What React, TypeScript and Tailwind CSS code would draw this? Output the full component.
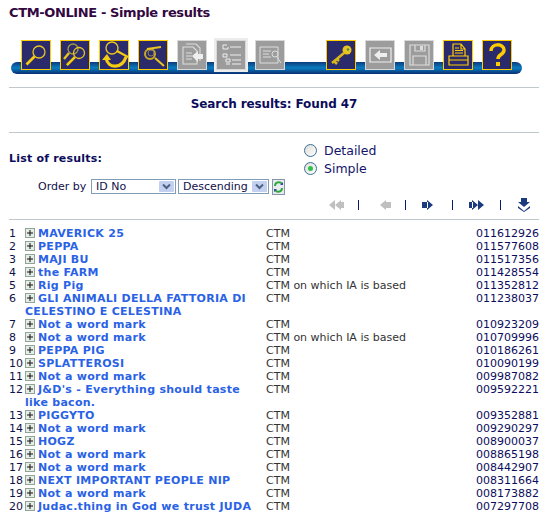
import type { ReactNode } from "react";

const rows = [
  { title: "MAVERICK 25", type: "CTM", no: "011612926" },
  { title: "PEPPA", type: "CTM", no: "011577608" },
  { title: "MAJI BU", type: "CTM", no: "011517356" },
  { title: "the FARM", type: "CTM", no: "011428554" },
  { title: "Rig Pig", type: "CTM on which IA is based", no: "011352812" },
  { title: "GLI ANIMALI DELLA FATTORIA DI CELESTINO E CELESTINA", type: "CTM", no: "011238037" },
  { title: "Not a word mark", type: "CTM", no: "010923209" },
  { title: "Not a word mark", type: "CTM on which IA is based", no: "010709996" },
  { title: "PEPPA PIG", type: "CTM", no: "010186261" },
  { title: "SPLATTEROSI", type: "CTM", no: "010090199" },
  { title: "Not a word mark", type: "CTM", no: "009987082" },
  { title: "J&D's - Everything should taste like bacon.", type: "CTM", no: "009592221" },
  { title: "PIGGYTO", type: "CTM", no: "009352881" },
  { title: "Not a word mark", type: "CTM", no: "009290297" },
  { title: "HOGZ", type: "CTM", no: "008900037" },
  { title: "Not a word mark", type: "CTM", no: "008865198" },
  { title: "Not a word mark", type: "CTM", no: "008442907" },
  { title: "NEXT IMPORTANT PEOPLE NIP", type: "CTM", no: "008311664" },
  { title: "Not a word mark", type: "CTM", no: "008173882" },
  { title: "Judac.thing in God we trust JUDA", type: "CTM", no: "007297708" },
];

const Lens = ({ cx = 17, cy = 12, r = 6 }: { cx?: number; cy?: number; r?: number }) => (
  <>
    <circle cx={cx} cy={cy} r={r} fill="none" stroke="#e8c420" strokeWidth="1.3" />
    <path d={`M${cx - r * 0.75} ${cy + r * 0.75}L${cx - r * 0.75 - 8} ${cy + r * 0.75 + 8}`} stroke="#f5cc10" strokeWidth="2.6" />
  </>
);

function ToolButton({ children, off, wide }: { children: ReactNode; off?: boolean; wide?: boolean }) {
  return (
    <div
      className={`relative flex h-[30px] w-[30px] shrink-0 items-center justify-center border ${
        off ? "border-[#d8d8d8] bg-[#9c9c9c]" : "border-[#ffcc00] bg-[#2b2b6b]"
      } ${wide ? "outline-2 outline-[#ececec]" : ""}`}
    >
      <svg width="28" height="28" viewBox="0 0 28 28" fill="none">
        {children}
      </svg>
    </div>
  );
}

function Sep() {
  return <span className="h-[10px] w-px bg-[#0a1a6a]" />;
}

function PlusIcon() {
  return (
    <span className="mr-[3px] inline-flex h-[10px] w-[10px] items-center justify-center border border-[#8fa596] bg-[#e6ece6]">
      <svg width="8" height="8" viewBox="0 0 8 8">
        <path d="M1 4H7M4 1V7" stroke="#111" strokeWidth="1" />
      </svg>
    </span>
  );
}

function FakeSelect({ label, width }: { label: string; width: string }) {
  return (
    <div className={`flex h-[15px] items-center justify-between border border-[#7f9db9] bg-white pl-[4px] pr-[1px] ${width}`}>
      <span className="text-[#10104a]">{label}</span>
      <span className="flex h-[11px] w-[15px] items-center justify-center rounded-[1px] bg-[#c3d0f0]">
        <svg width="9" height="7" viewBox="0 0 9 7">
          <path d="M1 1.5L4.5 5L8 1.5" fill="none" stroke="#4d6185" strokeWidth="2" />
        </svg>
      </span>
    </div>
  );
}

function Radio({ label, on }: { label: string; on?: boolean }) {
  return (
    <div className="flex h-[18px] items-center gap-[7px] text-[12.5px] text-[#14146a]">
      <span className="flex h-[13px] w-[13px] items-center justify-center rounded-full border border-[#3d6f97] bg-gradient-to-br from-[#dcdcd8] to-white">
        {on && <span className="h-[5px] w-[5px] rounded-full bg-[#2fc04a]" />}
      </span>
      {label}
    </div>
  );
}

export default function App() {
  return (
    <div className="h-[516px] w-[549px] overflow-hidden bg-white pl-[9px] pr-[10px] font-['DejaVu_Sans',Verdana,sans-serif] text-[11px] leading-[13px] text-[#10104a]">
      <h1 className="pt-[4px] text-[13px] font-bold leading-[17px] tracking-[-0.38px] text-[#33073f]">CTM-ONLINE - Simple results</h1>

      <div className="relative mt-[19px] h-[34px] w-[513px]">
        <div className="absolute bottom-0 left-[2px] h-[12px] w-[511px] rounded-[6px] bg-gradient-to-b from-[#0b3c7e] via-[#0a7cc0] to-[#0a2f72]" />
        <div className="relative ml-[12px] flex gap-[9px]">
          <ToolButton><Lens cx={17} cy={11} r={6} /></ToolButton>
          <ToolButton>
            <circle cx="12" cy="8" r="5" stroke="#a89a40" strokeWidth="1.3" />
            <path d="M8 12L3 18" stroke="#e8c420" strokeWidth="2.4" />
            <Lens cx={18} cy={12} r={5.5} />
          </ToolButton>
          <ToolButton>
            <circle cx="12" cy="7" r="6" stroke="#e8c420" strokeWidth="1.4" />
            <path d="M17 10L28 16" stroke="#f5cc10" strokeWidth="2" />
            <path d="M6 17C8 28 22 28 26 16" stroke="#f5cc10" strokeWidth="3.2" />
            <path d="M2 19L7 13L11 19Z" fill="#f5cc10" />
          </ToolButton>
          <ToolButton>
            <circle cx="11" cy="13" r="5" stroke="#c8a820" strokeWidth="2" />
            <circle cx="12" cy="12" r="3" stroke="#8a8060" strokeWidth="1" />
            <path d="M8 8L22 6M16 17L25 25" stroke="#e8c420" strokeWidth="2" />
          </ToolButton>
          <ToolButton off>
            <path d="M5 6H15L19 10V23H5Z M8 3H18L22 7V20" stroke="#ddd" strokeWidth="1.1" />
            <path d="M8 12H14M8 15H14M8 18H14" stroke="#ddd" />
            <path d="M14 15L20 10V13H25V18H20V21Z" fill="#eee" />
          </ToolButton>
          <ToolButton off wide>
            <path d="M6 4H10M6 4V8H11V6M13 6H24M6 13H10V16H6ZM13 14H24M9 18H13V21H9ZM15 19H24M9 23H13M15 23H24" stroke="#eee" strokeWidth="1" />
          </ToolButton>
          <ToolButton off>
            <path d="M4 6H22V22H4ZM7 10H15M7 13H13M7 16H15" stroke="#ddd" strokeWidth="1" />
            <circle cx="19" cy="13" r="3" stroke="#ddd" />
            <path d="M21 16L25 22" stroke="#ddd" />
          </ToolButton>
          <div className="w-[23px] shrink-0" />
          <ToolButton>
            <circle cx="20" cy="9" r="4.5" fill="#e8c420" />
            <circle cx="21" cy="8.5" r="1.2" fill="#4a8a50" />
            <path d="M17 12L5 22M7 20L10 23M10 18L12 20" stroke="#d8b818" strokeWidth="2.5" />
          </ToolButton>
          <ToolButton off>
            <path d="M4 7H25V21H4Z" stroke="#eee" strokeWidth="1.2" />
            <path d="M8 14L14 9V12H21V16H14V19Z" fill="#eee" />
          </ToolButton>
          <ToolButton off>
            <path d="M5 4H24V24H5ZM10 4V10H20V4M8 15H21V24H8Z" stroke="#ddd" strokeWidth="1.2" />
            <path d="M15 5H18V9H15Z" fill="#ddd" />
          </ToolButton>
          <ToolButton>
            <path d="M9 3H17L21 8V15H9ZM17 3V8H21M11 7H15M11 9.5H19M11 12H19M5 15H24V24H5ZM5 19H24" stroke="#ffcc00" strokeWidth="1.2" />
          </ToolButton>
          <ToolButton>
            <path d="M8 10C8 2 21 2 21 9C21 14 15 13 15 18" stroke="#ffcc00" strokeWidth="3.5" />
            <path d="M13 21H17V25H13Z" fill="#ffcc00" />
          </ToolButton>
        </div>
      </div>

      <hr className="mt-[13px] border-t border-[#c0c8cc]" />
      <p className="mt-[9px] text-center text-[12px] font-bold leading-[15px] tracking-[-0.1px] text-[#0c0c5c]">Search results: Found 47</p>
      <hr className="mt-[20px] border-t border-[#c0c8cc]" />

      <div className="flex">
        <p className="mt-[19px] w-[295px] shrink-0 font-bold tracking-[0.2px] text-[#0c0c5c]">List of results:</p>
        <div className="mt-[8px]">
          <Radio label="Detailed" />
          <Radio label="Simple" on />
        </div>
      </div>

      <div className="mt-[2px] flex h-[15px] items-center pl-[29px]">
        <span className="w-[53px] whitespace-nowrap">Order by</span>
        <FakeSelect label="ID No" width="w-[85px]" />
        <div className="w-[2px]" />
        <FakeSelect label="Descending" width="w-[91px]" />
        <svg className="ml-[3px]" width="13" height="16" viewBox="0 0 13 16">
          <rect x="0.5" y="0.5" width="12" height="15" fill="#e8ecf0" stroke="#8a94a8" />
          <path d="M3 7C3 3 8 2 10 5M10 9C10 13 5 14 3 11" fill="none" stroke="#2fa83a" strokeWidth="2" />
          <path d="M8 6H11V3ZM5 10H2V13Z" fill="#2a4fa0" />
        </svg>
      </div>

      <div className="mt-[4px] flex h-[14px] items-center justify-end pr-[9px]">
        <svg className="mr-[14px]" width="15" height="10" viewBox="0 0 15 10" fill="#c0c0c0"><path d="M0 5L6 0V10ZM6 5L12 0V10ZM11 2H15V8H11Z" /></svg>
        <Sep />
        <svg className="mx-[14px] ml-[21px]" width="11" height="10" viewBox="0 0 11 10" fill="#c0c0c0"><path d="M0 5L6 0V10ZM5 2H11V8H5Z" /></svg>
        <Sep />
        <svg className="ml-[16px] mr-[19px]" width="11" height="10" viewBox="0 0 11 10" fill="#1c3a80"><path d="M11 5L5 0V10ZM0 2H6V8H0Z" /></svg>
        <Sep />
        <svg className="ml-[16px] mr-[16px]" width="15" height="10" viewBox="0 0 15 10" fill="#1c3a80"><path d="M15 5L9 0V10ZM9 5L3 0V10ZM0 2H4V8H0Z" /></svg>
        <Sep />
        <svg className="ml-[17px]" width="12" height="14" viewBox="0 0 12 14" fill="#1c3a80"><path d="M3 0H9V4H12L6 9L0 4H3ZM0 8L6 13L12 8V10L6 14L0 10Z" /></svg>
      </div>

      <hr className="mt-[7px] border-t border-[#c0c8cc]" />

      <div className="mt-[7px]">
        {rows.map((r, i) => (
          <div key={i} className="flex items-start">
            <span className="w-[16px] shrink-0">{i + 1}</span>
            <span className="w-[241px] shrink-0 pr-[6px] font-bold tracking-[0.28px] text-[#2a62e6]">
              <PlusIcon />
              {r.title}
            </span>
            <span className="flex-1 text-[#333]">{r.type}</span>
            <span className="text-[#0c0c5c]">{r.no}</span>
          </div>
        ))}
      </div>
    </div>
  );
}
